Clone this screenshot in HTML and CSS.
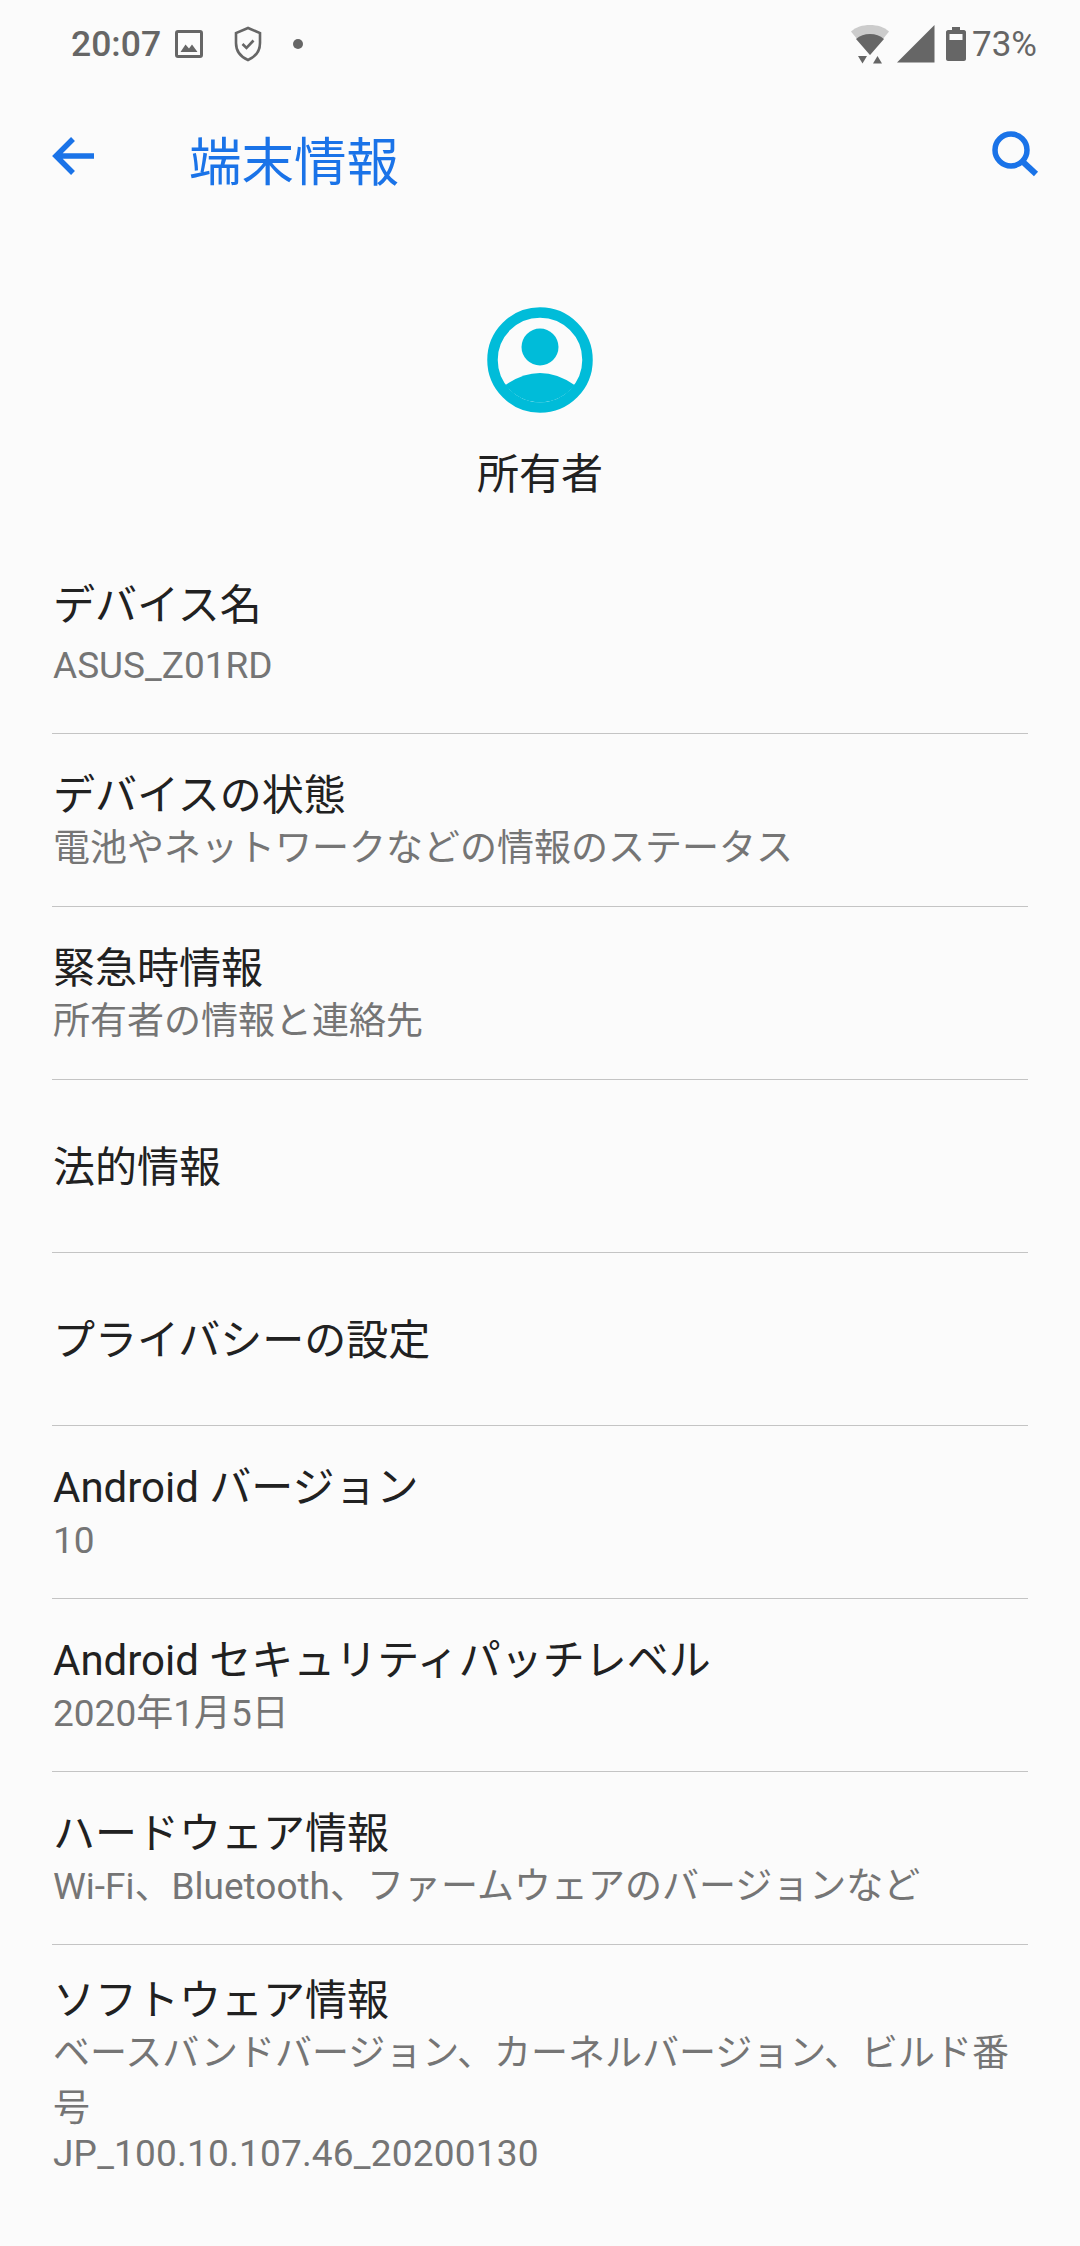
FILE: index.html
```html
<!DOCTYPE html>
<html lang="ja">

<head>
    <meta charset="utf-8">
    <title>端末情報</title>
    <link rel="stylesheet" href="styles.css">
</head>

<body>
    <div class="status-bar">
        <div class="status-left">
            <span class="status-time">20:07</span>
            <svg class="icon-picture" width="30" height="30" viewBox="0 0 30 30">
                <rect x="2.500" y="2.500" width="25" height="25" rx="1.500" fill="none" stroke="#666" stroke-width="3"/>
                <path d="M6.500 23l5-7.500 3.500 4 3-4 5.500 7.500z" fill="#666"/>
            </svg>
            <svg class="icon-shield" width="28" height="36" viewBox="0 0 28 36">
                <path d="M14 2L2 7v10c0 8 5 14 12 17 7-3 12-9 12-17V7z" fill="none" stroke="#666" stroke-width="2.600"/>
                <path d="M8.500 18l4 4 7-7.500" fill="none" stroke="#666" stroke-width="2.600"/>
            </svg>
            <span class="status-dot"></span>
        </div>
        <div class="status-right">
            <svg class="icon-wifi" width="38" height="40" viewBox="0 0 38 40">
                <path d="M0 7.500C5 3 11.500 1 19 1s14 2 19 6.500L19 31z" fill="#ccc"/>
                <path d="M5 15c4-3.500 8.500-5 14-5s10 1.500 14 5L19 31z" fill="#666"/>
                <path d="M7 32h9l-4.500 7.500z" fill="#666"/>
                <path d="M26.500 32l4.500 7.500h-9z" fill="#666"/>
            </svg>
            <svg class="icon-signal" width="38" height="38" viewBox="0 0 38 38">
                <path d="M0 37.500L37.500 0v37.500z" fill="#666"/>
            </svg>
            <svg class="icon-battery" width="20" height="34" viewBox="0 0 20 34">
                <path d="M6 0h8v3h4c1 0 2 1 2 2v27c0 1-1 2-2 2H2c-1 0-2-1-2-2V5c0-1 1-2 2-2h4z" fill="#666"/>
                <rect x="3.500" y="7" width="13" height="6" fill="#fbfbfb"/>
            </svg>
            <span class="status-battery">73%</span>
        </div>
    </div>

    <div class="app-bar">
        <svg class="icon-back" width="44" height="44" viewBox="0 0 44 44">
            <path d="M43 22H6M22 5L5 22l17 17" fill="none" stroke="#1a73e8" stroke-width="5.500"/>
        </svg>
        <h1 class="app-title">端末情報</h1>
        <svg class="icon-search" width="48" height="48" viewBox="0 0 48 48">
            <circle cx="20" cy="20" r="16" fill="none" stroke="#1a73e8" stroke-width="5.500"/>
            <path d="M31 31l14 13" fill="none" stroke="#1a73e8" stroke-width="6"/>
        </svg>
    </div>

    <div class="owner">
        <svg class="owner-avatar" width="106" height="106" viewBox="0 0 106 106">
            <circle cx="53" cy="53" r="47.500" fill="none" stroke="#00bcd9" stroke-width="10.500"/>
            <circle cx="53" cy="40" r="18.500" fill="#00bcd9"/>
            <path d="M18.500 78Q53 54 87.500 78A43 43 0 0 1 18.500 78z" fill="#00bcd9"/>
        </svg>
        <div class="owner-name">所有者</div>
    </div>

    <ul class="info-list">
        <li class="info-row first">
            <div class="info-title">デバイス名</div>
            <div class="info-sub sub-gap">ASUS_Z01RD</div>
        </li>
        <li class="info-row">
            <div class="info-title">デバイスの状態</div>
            <div class="info-sub">電池やネットワークなどの情報のステータス</div>
        </li>
        <li class="info-row">
            <div class="info-title">緊急時情報</div>
            <div class="info-sub">所有者の情報と連絡先</div>
        </li>
        <li class="info-row single">
            <div class="info-title">法的情報</div>
        </li>
        <li class="info-row single">
            <div class="info-title">プライバシーの設定</div>
        </li>
        <li class="info-row">
            <div class="info-title">Android バージョン</div>
            <div class="info-sub">10</div>
        </li>
        <li class="info-row">
            <div class="info-title">Android セキュリティパッチレベル</div>
            <div class="info-sub">2020年1月5日</div>
        </li>
        <li class="info-row">
            <div class="info-title">ハードウェア情報</div>
            <div class="info-sub">Wi-Fi、Bluetooth、ファームウェアのバージョンなど</div>
        </li>
        <li class="info-row last">
            <div class="info-title">ソフトウェア情報</div>
            <div class="info-sub sub-wrap">ベースバンドバージョン、カーネルバージョン、ビルド番号</div>
            <div class="info-sub sub-build">JP_100.10.107.46_20200130</div>
        </li>
    </ul>
</body>

</html>
```

FILE: styles.css
```css
* {
    box-sizing: border-box;
}

body {
    margin: 0;
    width: 1080px;
    height: 2246px;
    overflow: hidden;
    background-color: #fbfbfb;
    color: #212121;
    font-family: Roboto, "Noto Sans CJK JP", sans-serif;
}

.status-bar {
    height: 88px;
    padding: 0 43px 0 71px;
    display: flex;
    align-items: center;
    justify-content: space-between;
    color: #666;
}

.status-left,
.status-right {
    display: flex;
    align-items: center;
}

.status-time {
    font-size: 35.500px;
    font-weight: 500;
}

.icon-picture {
    margin-left: 13px;
}

.icon-shield {
    margin-left: 30px;
}

.status-dot {
    width: 10px;
    height: 10px;
    margin-left: 31px;
    border-radius: 50%;
    background-color: #666;
}

.icon-signal {
    margin-left: 8px;
}

.icon-battery {
    margin-left: 11px;
}

.status-battery {
    margin-left: 6px;
    font-size: 35px;
}

.app-bar {
    height: 134px;
    padding: 0 41px 0 51px;
    display: flex;
    align-items: center;
}

.icon-back {
    margin-top: 2px;
}

.app-title {
    margin: 6px 0 0 94px;
    flex: 1;
    color: #1a73e8;
    font-size: 52.500px;
    font-weight: 400;
}

.icon-search {
    margin-bottom: 2px;
}

.owner {
    height: 276px;
    padding-top: 85px;
    display: flex;
    flex-direction: column;
    align-items: center;
}

.owner-avatar {
    flex: none;
}

.owner-name {
    margin-top: 32px;
    font-size: 42px;
    line-height: 60px;
}

.info-list {
    margin: 0 52px;
    padding: 0;
    list-style: none;
}

.info-row {
    height: 173px;
    padding-left: 1px;
    border-bottom: 1px solid #c4c4c4;
    display: flex;
    flex-direction: column;
    justify-content: center;
}

.info-row.first {
    height: 236px;
    padding-top: 36px;
}

.info-row.single {
    padding-top: 4px;
}

.info-row.last {
    height: auto;
    padding-top: 27px;
    border-bottom: 0;
}

.info-title {
    font-size: 42px;
    line-height: 58px;
}

.info-sub {
    color: #757575;
    font-size: 37px;
    line-height: 48px;
}

.sub-gap {
    margin-top: 7px;
}

.sub-wrap {
    margin-top: -4px;
    line-height: 55px;
}

.sub-build {
    letter-spacing: 0.2px;
    line-height: 35px;
}
```
